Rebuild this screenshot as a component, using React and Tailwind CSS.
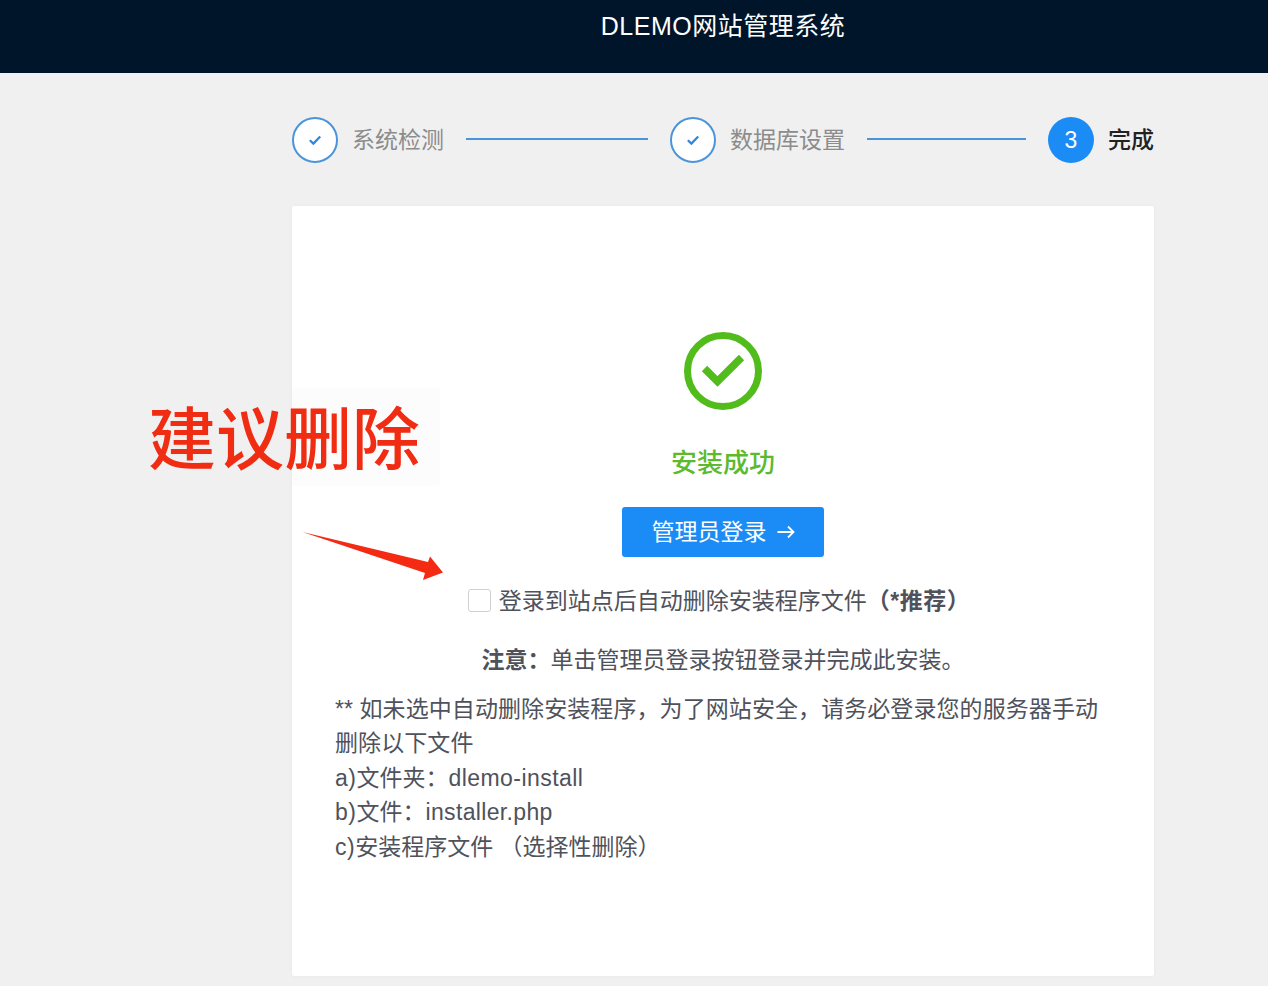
import React from "react";

const fontStack = '"Liberation Sans", "Noto Sans CJK SC", sans-serif';

const CheckIcon = ({ className }) => (
  <svg viewBox="0 0 14 14" className={className} fill="none" stroke="currentColor" strokeWidth="2.2">
    <path d="M1.8 7.2 L5.4 10.6 L12.2 3.6" />
  </svg>
);

const DoneStep = ({ title }) => (
  <div className="flex flex-1 items-center">
    <div className="flex h-[46px] w-[46px] shrink-0 items-center justify-center rounded-full border-2 border-[#4a94dc] bg-white text-[#2f86dc]">
      <CheckIcon className="h-[14px] w-[14px]" />
    </div>
    <span className="ml-[14px] shrink-0 text-[23px] text-[#8c8c8c]">{title}</span>
    <div className="mx-[22px] mb-[2px] h-[2px] flex-1 bg-[#4a94dc]" />
  </div>
);

const Steps = () => (
  <div className="flex h-[46px] items-center">
    <DoneStep title="系统检测" />
    <DoneStep title="数据库设置" />
    <div className="flex items-center">
      <div className="flex h-[46px] w-[46px] items-center justify-center rounded-full bg-[#1b8cf6] text-[23px] text-white">
        3
      </div>
      <span className="ml-[14px] text-[23px] font-medium text-[#222222]">完成</span>
    </div>
  </div>
);

const SuccessIcon = () => (
  <svg viewBox="0 0 80 80" className="h-[80px] w-[80px]" fill="none" stroke="#52bc1c">
    <circle cx="40" cy="40" r="35.5" strokeWidth="7" />
    <path d="M21.5 37.5 L34.5 50.5 L58.5 26.5" strokeWidth="7.5" />
  </svg>
);

const App = () => {
  return (
    <div
      className="relative h-[986px] overflow-hidden bg-[#f0f0f0] text-[23px] leading-[34.5px] text-[#4f525b]"
      style={{ fontFamily: fontStack }}
    >
      <header className="h-[73px] bg-[#001529] pl-[292px]">
        <div className="w-[862px] pt-[9px] text-center text-[25px] leading-[34px] tracking-[0.5px] text-white">
          DLEMO网站管理系统
        </div>
      </header>

      <main className="ml-[292px] w-[862px] pt-[44px]">
        <Steps />

        <div className="mt-[43px] flex h-[770px] flex-col items-center rounded-[2px] bg-white px-[43px] pt-[125px] shadow-[0_0_4px_rgba(0,0,0,0.04)]">
          <SuccessIcon />
          <div className="mt-[35px] text-[26px] font-medium text-[#5cba2c]">安装成功</div>

          <button className="mt-[26px] flex h-[50px] w-[202px] items-center justify-center rounded-[3px] bg-[#1b8cf6] pt-[1px] text-white">
            <span>管理员登录</span>
            <svg viewBox="0 0 18 14" className="ml-[10px] h-[14px] w-[18px]" fill="none" stroke="currentColor" strokeWidth="1.8">
              <path d="M0.5 7 H16.5 M11 1.5 L16.5 7 L11 12.5" />
            </svg>
          </button>

          <label className="mt-[27px] flex items-center pr-[8px]">
            <span className="h-[23px] w-[23px] rounded-[3px] border border-[#d0d0d0] bg-white" />
            <span className="ml-[8px]">
              登录到站点后自动删除安装程序文件<strong className="font-bold tracking-[0.5px]">（*推荐）</strong>
            </span>
          </label>

          <p className="mt-[25px]">
            <strong className="font-bold">注意：</strong>单击管理员登录按钮登录并完成此安装。
          </p>

          <div className="mt-[14px] w-full">
            <p className="tracking-[0.08px]">** 如未选中自动删除安装程序，为了网站安全，请务必登录您的服务器手动删除以下文件</p>
            <p>
              <span className="tracking-[0.5px]">a)</span>文件夹：<span className="tracking-[0.45px]">dlemo-install</span>
            </p>
            <p>
              <span className="tracking-[0.5px]">b)</span>文件：<span className="tracking-[0.35px]">installer.php</span>
            </p>
            <p>
              <span className="tracking-[0.5px]">c)</span>安装程序文件 （选择性删除）
            </p>
          </div>
        </div>
      </main>

      {/* screenshot annotation on top of the page */}
      <div className="absolute left-[128px] top-[388px] flex h-[98px] w-[312px] items-center justify-center rounded-[4px] bg-[#f4eeee]/20 pt-[5px] text-[68px] leading-none font-medium text-[#f02c12]">
        建议删除
      </div>
      <svg viewBox="0 0 150 55" className="absolute left-[300px] top-[530px] h-[55px] w-[150px]">
        <path d="M2.5 2 L128 32 L130 26.5 L143 42.5 L123 50 L125 43 Z" fill="#f42a12" />
      </svg>
    </div>
  );
};

export default App;
